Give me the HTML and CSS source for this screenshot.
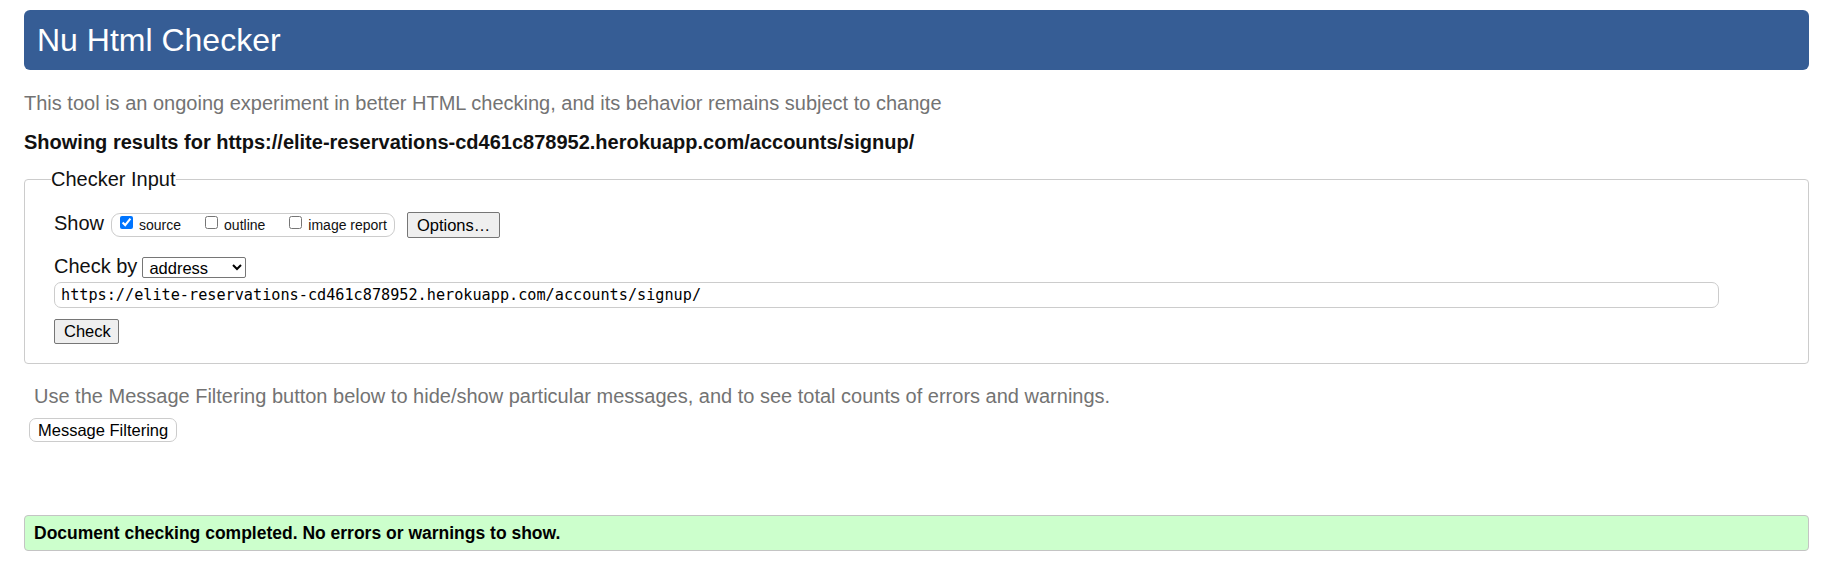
FILE: index.html
```html
<!DOCTYPE html>
<html lang="en">
<head>
<meta charset="utf-8">
<title>Showing results for https://elite-reservations-cd461c878952.herokuapp.com/accounts/signup/ - Nu Html Checker</title>
<link rel="stylesheet" href="styles.css">
</head>
<body>
<h1 class="title">Nu Html Checker</h1>
<p class="about">This tool is an ongoing experiment in better HTML checking, and its behavior remains subject to change</p>
<p class="showing">Showing results for https://elite-reservations-cd461c878952.herokuapp.com/accounts/signup/</p>
<form class="checker-form">
  <fieldset class="checker-input">
    <legend class="legend">Checker Input</legend>
    <div class="row show-row">
      <span class="row-label show-label">Show</span>
      <span class="show-group">
        <label class="opt"><input class="cb" type="checkbox" checked><span class="opt-text">source</span></label>
        <label class="opt"><input class="cb" type="checkbox"><span class="opt-text">outline</span></label>
        <label class="opt"><input class="cb" type="checkbox"><span class="opt-text">image report</span></label>
      </span>
      <button class="btn options-btn" type="button">Options…</button>
    </div>
    <div class="row checkby-row">
      <label class="row-label checkby-label" for="docselect">Check by</label>
      <select class="doc-select" id="docselect">
        <option>address</option>
        <option>file upload</option>
        <option>text input</option>
      </select>
    </div>
    <input class="url-input" type="url" value="https://elite-reservations-cd461c878952.herokuapp.com/accounts/signup/">
    <div class="submit-row"><button class="btn check-btn" type="button">Check</button></div>
  </fieldset>
</form>
<div class="filter-section">
  <p class="filter-note">Use the Message Filtering button below to hide/show particular messages, and to see total counts of errors and warnings.</p>
  <button class="filter-btn" type="button">Message Filtering</button>
</div>
<div class="success">
  <p class="success-text">Document checking completed. No errors or warnings to show.</p>
</div>
</body>
</html>
```

FILE: styles.css
```css
html, body {
  background: #ffffff;
}

body {
  margin: 0;
  padding: 10px 28px 0 24px;
  font-family: "Liberation Sans", Arial, Helvetica, sans-serif;
  color: #000;
}

.title {
  margin: 0;
  height: 60px;
  box-sizing: border-box;
  padding: 10px 13px;
  background: #365d95;
  color: #ffffff;
  font-size: 32px;
  font-weight: normal;
  line-height: 40px;
  border-radius: 6px;
}

.about {
  margin: 21px 0 0 0;
  font-size: 20px;
  line-height: 24px;
  color: #737373;
}

.showing {
  margin: 16px 0 0 0;
  font-size: 20px;
  line-height: 22px;
  font-weight: bold;
  color: #111;
}

.checker-form {
  margin: 14px 0 0 0;
}

.checker-input {
  margin: 0;
  padding: 21px 29px 19px 29px;
  border: 1px solid #cccccc;
  border-radius: 4px;
  min-width: 0;
}

.legend {
  margin-left: -3px;
  padding: 0;
  font-size: 20px;
  line-height: 24px;
  color: #111;
}

.row {
  display: flex;
  align-items: flex-start;
}

.row-label {
  font-size: 20px;
  color: #111;
}

.show-row {
  height: 26px;
}

.show-label {
  line-height: 22px;
}

.show-group {
  display: inline-flex;
  align-items: flex-start;
  gap: 24px;
  margin: 1px 0 0 7px;
  height: 24px;
  box-sizing: border-box;
  padding: 1px 7px 0 8px;
  border: 1px solid #cccccc;
  border-radius: 9px;
}

.opt {
  display: inline-flex;
  align-items: flex-start;
  gap: 6px;
}

.cb {
  margin: 1px 0 0 0;
  width: 13px;
  height: 13px;
}

.opt-text {
  margin-top: 2px;
  font-size: 14px;
  line-height: 16px;
  color: #111;
}

.btn {
  font-family: "Liberation Sans", Arial, Helvetica, sans-serif;
  font-size: 16.5px;
  color: #000;
  background: #efefef;
  border: 1px solid #767676;
  border-radius: 2px;
  padding: 0 9px;
  box-sizing: border-box;
  white-space: nowrap;
}

.options-btn {
  margin-left: 12px;
  height: 26px;
  width: 93px;
}

.checkby-row {
  margin-top: 19px;
  height: 21px;
}

.checkby-label {
  line-height: 18px;
}

.doc-select {
  margin-left: 5px;
  width: 104px;
  height: 21px;
  box-sizing: border-box;
  font-family: "Liberation Sans", Arial, Helvetica, sans-serif;
  font-size: 16.5px;
  color: #000;
  background: #ffffff;
  border: 1px solid #767676;
  border-radius: 2px;
  padding: 0 0 0 2px;
}

.url-input {
  display: block;
  margin: 4px 0 0 0;
  width: calc(100% - 60px);
  height: 26px;
  box-sizing: border-box;
  padding: 0 6px;
  font-family: "DejaVu Sans Mono", "Liberation Mono", monospace;
  font-size: 15.2px;
  color: #000;
  background: #ffffff;
  border: 1px solid #cccccc;
  border-radius: 7px;
  outline: none;
}

.submit-row {
  margin-top: 11px;
}

.check-btn {
  height: 25px;
  width: 65px;
  display: block;
}

.filter-section {
  padding: 0 0 0 5px;
}

.filter-note {
  margin: 20px 0 0 5px;
  font-size: 20px;
  line-height: 24px;
  color: #737373;
}

.filter-btn {
  display: block;
  margin: 10px 0 0 0;
  height: 24px;
  box-sizing: border-box;
  padding: 0 8px;
  white-space: nowrap;
  font-family: "Liberation Sans", Arial, Helvetica, sans-serif;
  font-size: 16.5px;
  color: #000;
  background: #ffffff;
  border: 1px solid #cccccc;
  border-radius: 7px;
}

.success {
  margin-top: 73px;
  height: 36px;
  box-sizing: border-box;
  padding: 6px 9px;
  background: #ccffcc;
  border: 1px solid #c4c4c4;
  border-radius: 4px;
}

.success-text {
  margin: 0;
  font-size: 17.5px;
  line-height: 22px;
  font-weight: bold;
  color: #000;
}
```
